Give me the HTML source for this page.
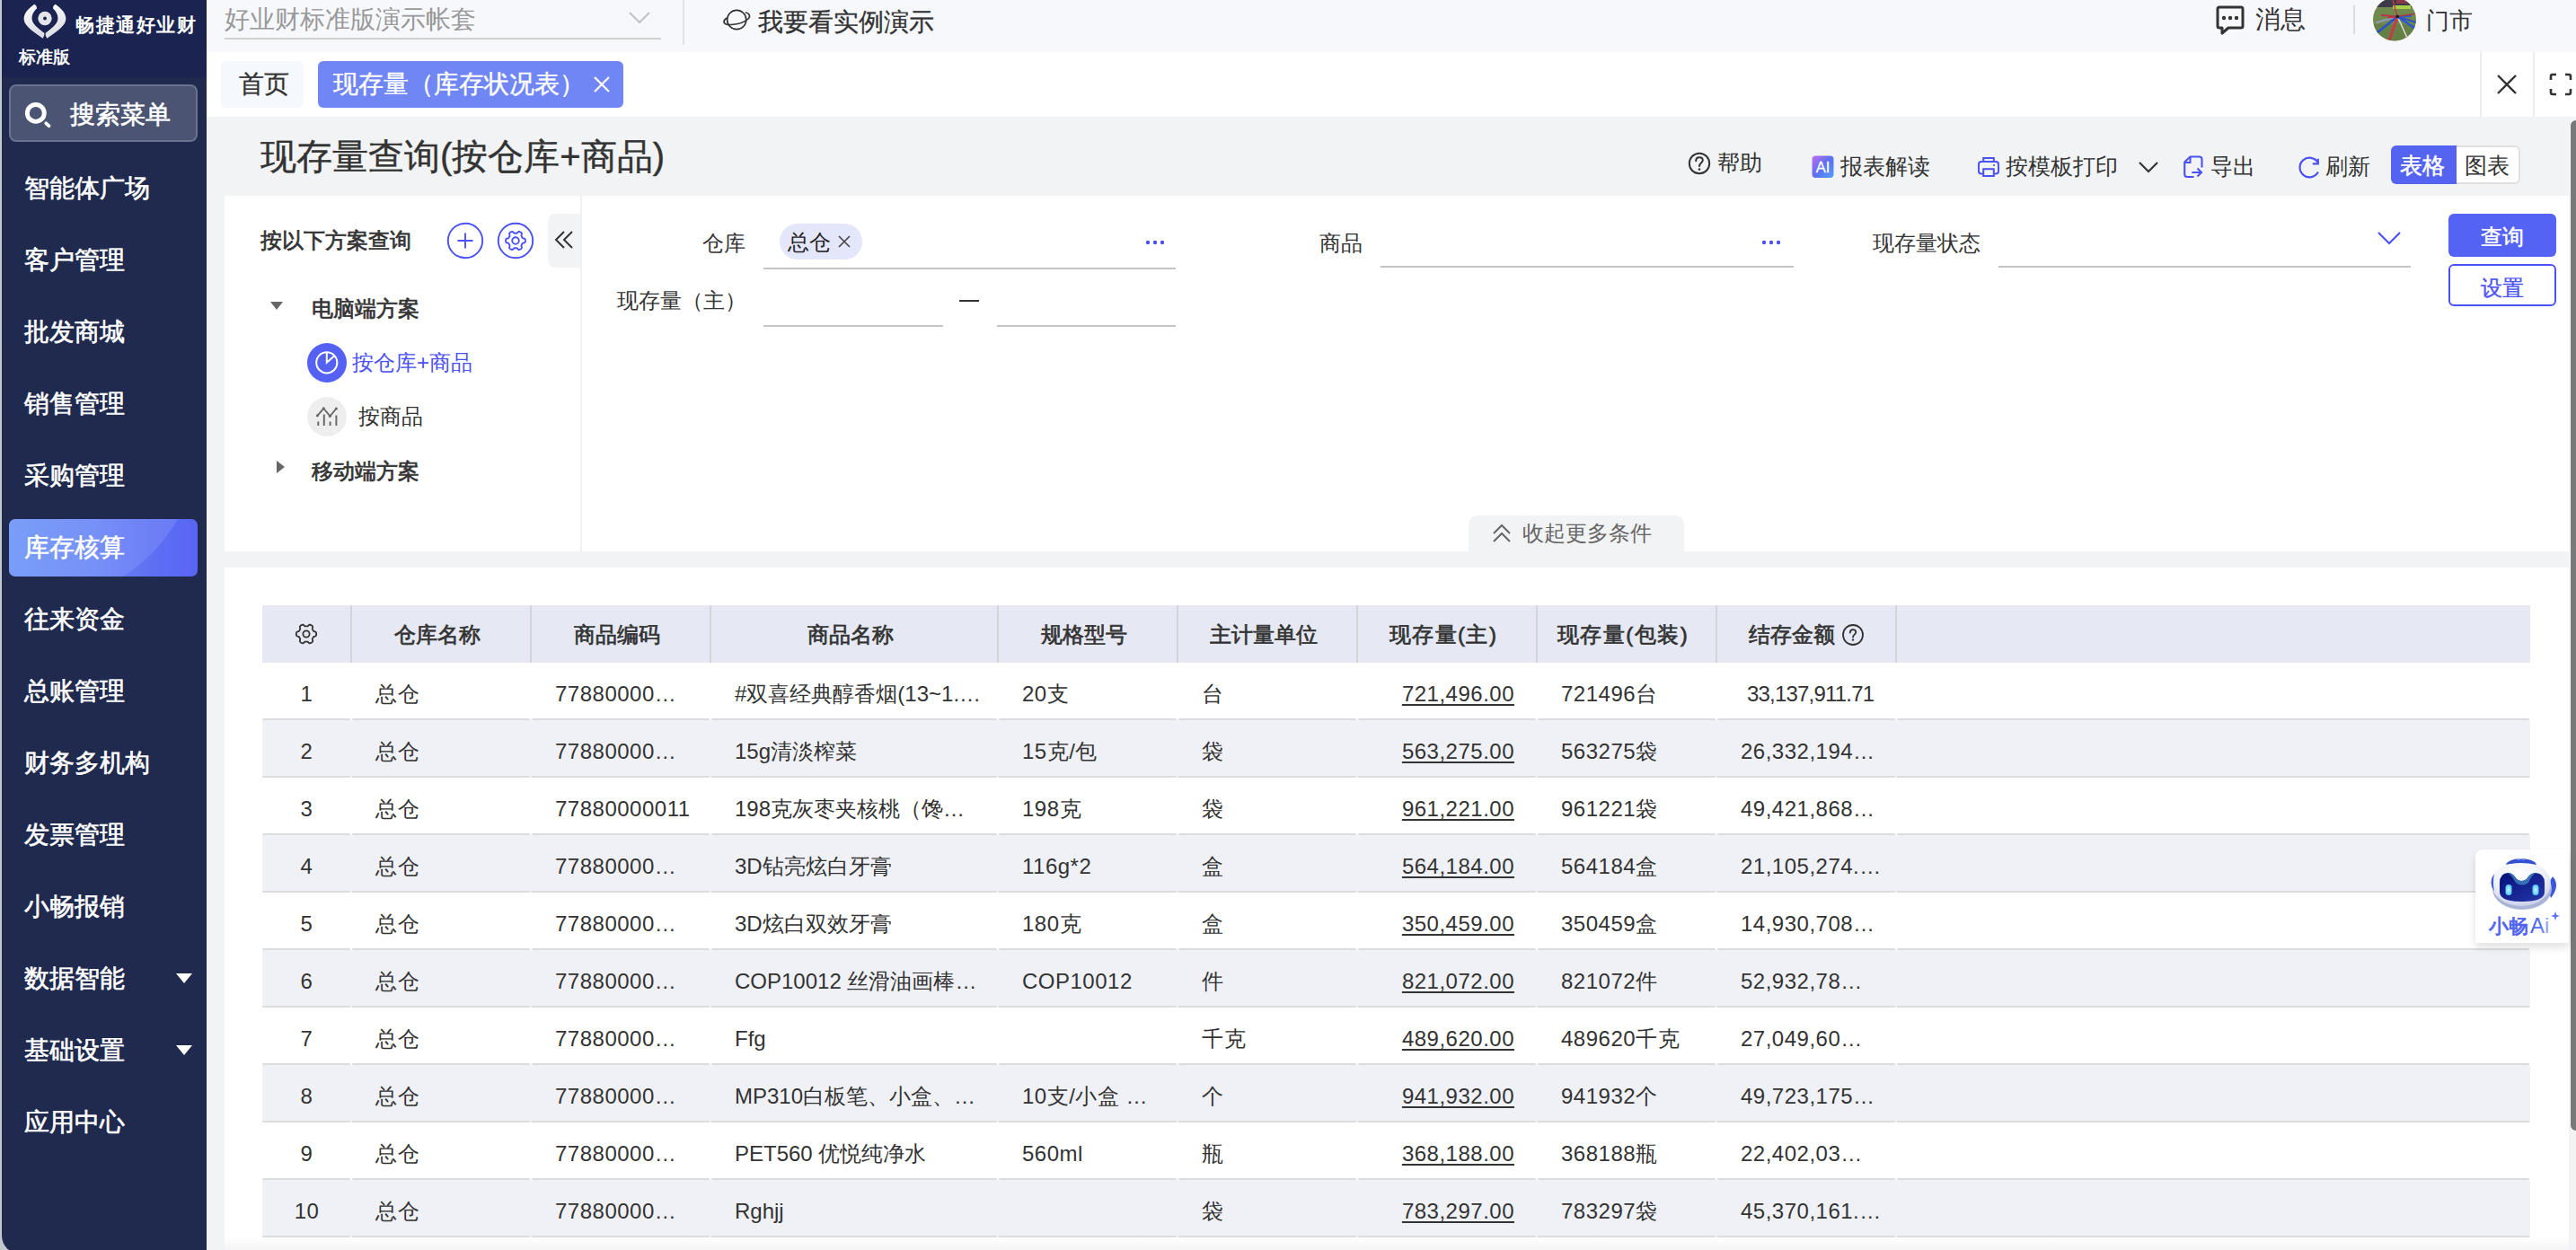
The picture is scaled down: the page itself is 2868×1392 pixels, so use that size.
<!DOCTYPE html>
<html><head><meta charset="utf-8">
<style>
*{box-sizing:border-box;margin:0;padding:0}
html,body{width:2868px;height:1392px;overflow:hidden;background:#f2f3f5;font-family:"Liberation Sans",sans-serif;color:#333}
.a{position:absolute;white-space:nowrap}
#side{position:absolute;left:0;top:0;width:230px;height:1392px;background:#c3c7ce;overflow:hidden}
#sidein{position:absolute;left:2px;top:0;width:228px;height:1396px;background:#1f2a4e;border-bottom-left-radius:20px;overflow:hidden}
#logo{position:absolute;left:0;top:0;width:228px;height:86px;background:#1b2451}
.menu{position:absolute;left:25px;font-size:28px;line-height:40px;color:#fff;font-weight:400;-webkit-text-stroke:0.6px #fff;white-space:nowrap}
#top{position:absolute;left:230px;top:0;width:2638px;height:58px;background:#f7f8fc}
#tabs{position:absolute;left:230px;top:58px;width:2638px;height:72px;background:#fff}
#qp{position:absolute;left:250px;top:218px;width:2610px;height:396px;background:#fff}
#tbl{position:absolute;left:250px;top:632px;width:2610px;height:780px;background:#fff}
.th{font-size:24px;line-height:40px;color:#333;-webkit-text-stroke:0.7px #333}
.td{font-size:24px;line-height:40px;color:#333;letter-spacing:0.5px}
.td u{text-decoration:underline;text-underline-offset:3px;text-decoration-thickness:1.5px}
</style></head><body>

<div id="side"><div id="sidein">
  <div id="logo">
    <svg class="a" style="left:-2px;top:0px" width="100" height="50" viewBox="0 0 100 50">
      <defs><linearGradient id="lg1" x1="0" y1="0" x2="0.3" y2="1"><stop offset="0" stop-color="#ffffff"/><stop offset="1" stop-color="#dcdde3"/></linearGradient></defs>
      <path d="M38.2 4.7 C31 10 26 15 26.7 22 C27.5 30 40 37 47.6 42.7 C49.5 40 49.5 38 49.3 36.7 C42 31 36 27 35.6 21 C35.2 16 38 12 41 9.4 C41 7 40 5.5 38.2 4.7 Z" fill="url(#lg1)"/>
      <path d="M61.8 4.7 C69 10 74 15 73.3 22 C72.5 30 60 37 52.4 42.7 C50.5 40 50.5 38 50.7 36.7 C58 31 64 27 64.4 21 C64.8 16 62 12 59 9.4 C59 7 60 5.5 61.8 4.7 Z" fill="url(#lg1)"/>
      <circle cx="50" cy="20.5" r="7.7" fill="#e4e5ea"/>
      <circle cx="50" cy="20.5" r="1.9" fill="#1b2451"/>
    </svg>
    <div class="a" style="left:82px;top:13px;font-size:21px;line-height:30px;color:#fff;font-weight:700;letter-spacing:1.5px">畅捷通好业财</div>
    <div class="a" style="left:19px;top:50px;font-size:19px;line-height:28px;color:#fff;font-weight:400;-webkit-text-stroke:0.6px #fff">标准版</div>
  </div>
  <div class="a" style="left:8px;top:94px;width:210px;height:64px;background:#4b5472;border:2px solid #6a7290;border-radius:8px"></div>
  <svg class="a" style="left:-2px;top:100px" width="70" height="50" viewBox="0 100 70 50"><circle cx="39.8" cy="125.9" r="9.45" fill="none" stroke="#fff" stroke-width="4.9"/><path d="M51.3 137.3 L54.5 140.2" stroke="#fff" stroke-width="3.8" stroke-linecap="round"/></svg>
  <div class="a" style="left:76px;top:108px;font-size:28px;line-height:40px;color:#fff;font-weight:400;-webkit-text-stroke:0.6px #fff">搜索菜单</div>
  <div class="menu" style="top:190px">智能体广场</div>
  <div class="menu" style="top:270px">客户管理</div>
  <div class="menu" style="top:350px">批发商城</div>
  <div class="menu" style="top:430px">销售管理</div>
  <div class="menu" style="top:510px">采购管理</div>
  <div class="a" style="left:8px;top:578px;width:210px;height:64px;border-radius:7px;background:linear-gradient(90deg,#6e9af6 0%,#6a88f5 45%,#5f70f3 75%,#5865f3 100%);overflow:hidden">
    <div class="a" style="left:-128px;top:-248px;width:336px;height:336px;border-radius:50%;background:rgba(150,170,255,0.28)"></div>
  </div>
  <div class="menu" style="top:590px">库存核算</div>
  <div class="menu" style="top:670px">往来资金</div>
  <div class="menu" style="top:750px">总账管理</div>
  <div class="menu" style="top:830px">财务多机构</div>
  <div class="menu" style="top:910px">发票管理</div>
  <div class="menu" style="top:990px">小畅报销</div>
  <div class="menu" style="top:1070px">数据智能</div>
  <div class="a" style="left:194px;top:1084px;width:0;height:0;border-left:9px solid transparent;border-right:9px solid transparent;border-top:11px solid #fff"></div>
  <div class="menu" style="top:1150px">基础设置</div>
  <div class="a" style="left:194px;top:1164px;width:0;height:0;border-left:9px solid transparent;border-right:9px solid transparent;border-top:11px solid #fff"></div>
  <div class="menu" style="top:1230px">应用中心</div>
</div></div>

<div id="top">
  <div class="a" style="left:20px;top:2px;font-size:28px;line-height:40px;color:#999">好业财标准版演示帐套</div>
  <div class="a" style="left:20px;top:42px;width:486px;height:2px;background:#d0d0d0"></div>
  <svg class="a" style="left:468px;top:10px" width="28" height="20" viewBox="0 0 28 20"><path d="M3 4 L14 15 L25 4" fill="none" stroke="#c4c4c4" stroke-width="2.2"/></svg>
  <div class="a" style="left:530px;top:0;width:2px;height:50px;background:#e2e3e8"></div>
  <svg class="a" style="left:565px;top:0px" width="60" height="50" viewBox="0 0 60 50"><circle cx="25.2" cy="22" r="10.6" fill="none" stroke="#333" stroke-width="1.7"/><path d="M13.5 20.5 C9 24 10.5 28 19 27.5 C27 27 35 24 38.5 20.5 C40.5 18 39.5 15 35.5 14" fill="none" stroke="#333" stroke-width="1.7" stroke-linecap="round"/></svg>
  <div class="a" style="left:614px;top:5px;font-size:28px;line-height:40px;color:#333;-webkit-text-stroke:0.3px #333">我要看实例演示</div>
  <svg class="a" style="left:2236px;top:5px" width="34" height="36" viewBox="0 0 34 36"><path d="M5 3 H29 Q31 3 31 5 V24 Q31 26 29 26 H15 L8 32 V26 H5 Q3 26 3 24 V5 Q3 3 5 3 Z" fill="none" stroke="#333" stroke-width="3" stroke-linejoin="round"/><circle cx="10" cy="15" r="2.2" fill="#333"/><circle cx="17" cy="15" r="2.2" fill="#333"/><circle cx="24" cy="15" r="2.2" fill="#333"/></svg>
  <div class="a" style="left:2281px;top:2px;font-size:28px;line-height:40px;color:#333">消息</div>
  <div class="a" style="left:2390px;top:6px;width:2px;height:32px;background:#dcdde2"></div>
  <svg class="a" style="left:2412px;top:-3px" width="48" height="49" viewBox="0 0 48 49">
    <defs><clipPath id="avc"><circle cx="24" cy="24.6" r="24"/></clipPath></defs>
    <g clip-path="url(#avc)">
      <rect x="0" y="0" width="48" height="49" fill="#6f8a4c"/>
      <rect x="0" y="0" width="48" height="11" fill="#3c3a48"/>
      <rect x="26" y="2" width="12" height="5" fill="#8a3a44"/>
      <rect x="22" y="9" width="20" height="4" fill="#a8d04a"/>
      <rect x="0" y="30" width="48" height="19" fill="#5f7a40" opacity="0.6"/>
      <g stroke-linecap="round">
        <path d="M27.2 21.4 L4 28" stroke="#8d9bb8" stroke-width="2.2"/>
        <path d="M27.2 21.4 L5 39" stroke="#2a4fd0" stroke-width="2.6"/>
        <path d="M27.2 21.4 L18.5 47" stroke="#c83848" stroke-width="3"/>
        <path d="M27.2 21.4 L38 45" stroke="#d8d8d8" stroke-width="1.6"/>
        <path d="M27.2 21.4 L46 34" stroke="#2a58d8" stroke-width="2.6"/>
        <path d="M27.2 21.4 L48 28" stroke="#2a50c8" stroke-width="2"/>
        <path d="M27.2 21.4 L42 21" stroke="#2c5ad0" stroke-width="2"/>
        <path d="M27.2 21.4 L46 18.5" stroke="#a83a50" stroke-width="1.6"/>
        <path d="M27.2 21.4 L10 20" stroke="#b83444" stroke-width="2"/>
        <path d="M27.2 21.4 L17 22.5" stroke="#b83444" stroke-width="1.8"/>
        <path d="M27.2 21.4 L22 3" stroke="#c03a40" stroke-width="1.4"/>
      </g>
      <circle cx="27.2" cy="21.4" r="2" fill="#222"/>
    </g>
  </svg>
  <div class="a" style="left:2471px;top:4px;font-size:26px;line-height:38px;color:#333">门市</div>
</div>
<div id="tabs">
  <div class="a" style="left:16px;top:10px;width:92px;height:52px;background:#f5f8fd;border-radius:6px"></div>
  <div class="a" style="left:36px;top:16px;font-size:28px;line-height:40px;color:#333;-webkit-text-stroke:0.3px #333">首页</div>
  <div class="a" style="left:124px;top:10px;width:340px;height:52px;background:#7086f4;border-radius:6px"></div>
  <div class="a" style="left:141px;top:16px;font-size:28px;line-height:40px;color:#fff;-webkit-text-stroke:0.4px #fff">现存量（库存状况表）</div>
  <svg class="a" style="left:428px;top:24px" width="24" height="24" viewBox="0 0 24 24"><path d="M4 4 L20 20 M20 4 L4 20" stroke="#fff" stroke-width="2.2"/></svg>
  <div class="a" style="left:2531px;top:0;width:2px;height:72px;background:#ececec"></div>
  <svg class="a" style="left:2549px;top:24px" width="24" height="24" viewBox="0 0 24 24"><path d="M2 2 L22 22 M22 2 L2 22" stroke="#333" stroke-width="2.4"/></svg>
  <div class="a" style="left:2590px;top:0;width:2px;height:72px;background:#ececec"></div>
  <svg class="a" style="left:2608px;top:23px" width="26" height="26" viewBox="0 0 26 26"><path d="M2 8 V4 Q2 2 4 2 H8 M18 2 H22 Q24 2 24 4 V8 M24 18 V22 Q24 24 22 24 H18 M8 24 H4 Q2 24 2 22 V18" fill="none" stroke="#333" stroke-width="2.6"/></svg>
</div>
<div id="title">
  <div class="a" style="left:290px;top:146px;font-size:40px;line-height:56px;color:#333;-webkit-text-stroke:0.4px #333">现存量查询(按仓库+商品)</div>
  <svg class="a" style="left:1878px;top:168px" width="28" height="28" viewBox="0 0 28 28"><circle cx="14" cy="14" r="11.2" fill="none" stroke="#333" stroke-width="2"/><path d="M10.2 11.2 C10.2 8.5 12 7.2 14 7.2 C16.2 7.2 17.8 8.6 17.8 10.6 C17.8 13 14.2 13.6 14 17" fill="none" stroke="#333" stroke-width="2" stroke-linecap="round"/><circle cx="14" cy="20.6" r="1.3" fill="#333"/></svg>
  <div class="a" style="left:1912px;top:163px;font-size:25px;line-height:36px;color:#333">帮助</div>
  <svg class="a" style="left:2017px;top:173px" width="26" height="26" viewBox="0 0 26 26"><defs><linearGradient id="aig" x1="0" y1="0" x2="1" y2="1"><stop offset="0" stop-color="#c06cef"/><stop offset="0.5" stop-color="#5b70f2"/><stop offset="1" stop-color="#55a0f8"/></linearGradient></defs><rect x="0.5" y="0.5" width="24" height="24.5" rx="4" fill="url(#aig)"/><text x="12.5" y="19.2" text-anchor="middle" font-family="Liberation Sans" font-size="16.5" fill="#fff" stroke="#fff" stroke-width="0.3">AI</text></svg>
  <div class="a" style="left:2049px;top:167px;font-size:25px;line-height:36px;color:#333">报表解读</div>
  <svg class="a" style="left:2190px;top:160px" width="50" height="50" viewBox="0 0 50 50"><path d="M18.2 19 V16 H29.8 V19" fill="none" stroke="#4b52f5" stroke-width="2"/><path d="M18 33.5 H16 Q13 33.5 13 30.5 V23 Q13 20 16 20 H32 Q35 20 35 23 V30.5 Q35 33.5 32 33.5 H30" fill="none" stroke="#4b52f5" stroke-width="2"/><rect x="18.2" y="28.2" width="11.6" height="7.8" fill="none" stroke="#4b52f5" stroke-width="2"/><circle cx="30" cy="24" r="1.1" fill="#4b52f5"/></svg>
  <div class="a" style="left:2233px;top:167px;font-size:25px;line-height:36px;color:#333">按模板打印</div>
  <svg class="a" style="left:2378px;top:176px" width="28" height="20" viewBox="0 0 28 20"><path d="M4 5 L14 15 L24 5" fill="none" stroke="#333" stroke-width="2.2"/></svg>
  <svg class="a" style="left:2420px;top:160px" width="40" height="50" viewBox="0 0 40 50"><path d="M22.5 37 H15.5 Q12.2 37 12.2 34 V20.5 L18.5 14.5 H28.5 Q31.5 14.5 31.5 17.5 V26.5" fill="none" stroke="#4b52f5" stroke-width="2.1" stroke-linejoin="round"/><path d="M12.5 21 H18.5 V14.5" fill="none" stroke="#4b52f5" stroke-width="2"/><path d="M20.3 32 H31 M26.5 27.5 L31 32 L26.5 36.5" fill="none" stroke="#4b52f5" stroke-width="2.1"/></svg>
  <div class="a" style="left:2461px;top:167px;font-size:25px;line-height:36px;color:#333">导出</div>
  <svg class="a" style="left:2550px;top:165px" width="40" height="42" viewBox="0 0 40 42"><path d="M30.6 16 A10.8 10.8 0 1 0 30.9 26.5" fill="none" stroke="#4b52f5" stroke-width="2.2"/><path d="M24.8 17.4 H30.8 V11.8" fill="none" stroke="#4b52f5" stroke-width="2.2"/></svg>
  <div class="a" style="left:2589px;top:167px;font-size:25px;line-height:36px;color:#333">刷新</div>
  <div class="a" style="left:2662px;top:162px;width:144px;height:43px;border:2px solid #e0e0e0;border-radius:6px;background:#fff"></div>
  <div class="a" style="left:2662px;top:162px;width:73px;height:43px;border-radius:6px 0 0 6px;background:#5563f1"></div>
  <div class="a" style="left:2672px;top:166px;font-size:25px;line-height:36px;color:#fff;-webkit-text-stroke:0.5px #fff">表格</div>
  <div class="a" style="left:2744px;top:166px;font-size:25px;line-height:36px;color:#333">图表</div>
</div>
<div id="qp">
  <div class="a" style="left:40px;top:32px;font-size:24px;line-height:36px;color:#333;-webkit-text-stroke:0.7px #333">按以下方案查询</div>
  <svg class="a" style="left:247px;top:29px" width="42" height="42" viewBox="0 0 42 42"><circle cx="21" cy="21" r="19.2" fill="none" stroke="#4b52f5" stroke-width="1.9"/><path d="M12.5 21 H29.5 M21 12.5 V29.5" stroke="#4b52f5" stroke-width="1.9"/></svg>
  <svg class="a" style="left:303px;top:29px" width="42" height="42" viewBox="0 0 42 42"><circle cx="21" cy="21" r="19.2" fill="none" stroke="#4b52f5" stroke-width="1.9"/><g transform="translate(21 21)"><path d="M10.90 0.00 L10.88 0.48 L10.83 0.95 L10.72 1.41 L10.50 1.85 L10.02 2.22 L9.22 2.47 L8.43 2.66 L7.93 2.89 L7.65 3.17 L7.46 3.48 L7.28 3.79 L7.10 4.10 L6.92 4.41 L6.74 4.72 L6.57 5.04 L6.47 5.43 L6.52 5.97 L6.75 6.75 L6.93 7.57 L6.85 8.16 L6.58 8.58 L6.24 8.91 L5.85 9.19 L5.45 9.44 L5.03 9.66 L4.60 9.85 L4.14 9.99 L3.65 10.01 L3.09 9.79 L2.47 9.22 L1.91 8.63 L1.47 8.31 L1.08 8.21 L0.72 8.20 L0.36 8.20 L0.00 8.20 L-0.36 8.20 L-0.72 8.20 L-1.08 8.21 L-1.47 8.31 L-1.91 8.63 L-2.47 9.22 L-3.09 9.79 L-3.65 10.01 L-4.14 9.99 L-4.60 9.85 L-5.03 9.66 L-5.45 9.44 L-5.85 9.19 L-6.24 8.91 L-6.58 8.58 L-6.85 8.16 L-6.93 7.57 L-6.75 6.75 L-6.52 5.97 L-6.47 5.43 L-6.57 5.04 L-6.74 4.72 L-6.92 4.41 L-7.10 4.10 L-7.28 3.79 L-7.46 3.48 L-7.65 3.17 L-7.93 2.89 L-8.43 2.66 L-9.22 2.47 L-10.02 2.22 L-10.50 1.85 L-10.72 1.41 L-10.83 0.95 L-10.88 0.48 L-10.90 0.00 L-10.88 -0.48 L-10.83 -0.95 L-10.72 -1.41 L-10.50 -1.85 L-10.02 -2.22 L-9.22 -2.47 L-8.43 -2.66 L-7.93 -2.89 L-7.65 -3.17 L-7.46 -3.48 L-7.28 -3.79 L-7.10 -4.10 L-6.92 -4.41 L-6.74 -4.72 L-6.57 -5.04 L-6.47 -5.43 L-6.52 -5.97 L-6.75 -6.75 L-6.93 -7.57 L-6.85 -8.16 L-6.58 -8.58 L-6.24 -8.91 L-5.85 -9.19 L-5.45 -9.44 L-5.03 -9.66 L-4.60 -9.85 L-4.14 -9.99 L-3.65 -10.01 L-3.09 -9.79 L-2.47 -9.22 L-1.91 -8.63 L-1.47 -8.31 L-1.08 -8.21 L-0.72 -8.20 L-0.36 -8.20 L-0.00 -8.20 L0.36 -8.20 L0.72 -8.20 L1.08 -8.21 L1.47 -8.31 L1.91 -8.63 L2.47 -9.22 L3.09 -9.79 L3.65 -10.01 L4.14 -9.99 L4.60 -9.85 L5.03 -9.66 L5.45 -9.44 L5.85 -9.19 L6.24 -8.91 L6.58 -8.58 L6.85 -8.16 L6.93 -7.57 L6.75 -6.75 L6.52 -5.97 L6.47 -5.43 L6.57 -5.04 L6.74 -4.72 L6.92 -4.41 L7.10 -4.10 L7.28 -3.79 L7.46 -3.48 L7.65 -3.17 L7.93 -2.89 L8.43 -2.66 L9.22 -2.47 L10.02 -2.22 L10.50 -1.85 L10.72 -1.41 L10.83 -0.95 L10.88 -0.48 Z" fill="none" stroke="#4b52f5" stroke-width="1.9" stroke-linejoin="round"/><circle r="3.8" fill="none" stroke="#4b52f5" stroke-width="1.9"/></g></svg>
  <div class="a" style="left:360px;top:20px;width:37px;height:60px;background:#f2f3f5;border-radius:8px 0 0 8px"></div>
  <svg class="a" style="left:366px;top:38px" width="26" height="24" viewBox="0 0 26 24"><path d="M12 2 L3 11 L12 20 M21 2 L12 11 L21 20" fill="none" stroke="#333" stroke-width="2"/></svg>
  <div class="a" style="left:396px;top:0;width:2px;height:396px;background:#f0f1f3"></div>
  <div class="a" style="left:51px;top:118px;width:0;height:0;border-left:7px solid transparent;border-right:7px solid transparent;border-top:9px solid #666"></div>
  <div class="a" style="left:97px;top:106px;font-size:24px;line-height:40px;color:#333;-webkit-text-stroke:0.7px #333">电脑端方案</div>
  <div class="a" style="left:92px;top:164px;width:44px;height:44px;border-radius:50%;background:#5461f3"></div>
  <svg class="a" style="left:92px;top:164px" width="44" height="44" viewBox="0 0 44 44"><circle cx="21.8" cy="21.8" r="11.6" fill="none" stroke="#fff" stroke-width="2"/><path d="M21.8 10.2 V21.8 L30 14.6" fill="none" stroke="#fff" stroke-width="2"/></svg>
  <div class="a" style="left:142px;top:166px;font-size:24px;line-height:40px;color:#4b52f5">按仓库+商品</div>
  <div class="a" style="left:92px;top:224px;width:44px;height:44px;border-radius:50%;background:#eeeeee"></div>
  <svg class="a" style="left:92px;top:224px" width="44" height="44" viewBox="0 0 44 44"><path d="M11.4 20.8 L18.3 12.8 L25.4 21.4 L32.4 13" fill="none" stroke="#666" stroke-width="1.8" stroke-linejoin="round"/><circle cx="11.4" cy="20.8" r="1.5" fill="#666"/><circle cx="18.3" cy="12.8" r="1.5" fill="#666"/><circle cx="25.4" cy="21.4" r="1.5" fill="#666"/><circle cx="32.4" cy="13" r="1.5" fill="#666"/><path d="M12.3 27.5 V32 M18.8 19.5 V32 M25.6 27.5 V32 M32.4 20.5 V32" stroke="#666" stroke-width="1.9"/></svg>
  <div class="a" style="left:149px;top:226px;font-size:24px;line-height:40px;color:#333">按商品</div>
  <div class="a" style="left:58px;top:295px;width:0;height:0;border-top:7px solid transparent;border-bottom:7px solid transparent;border-left:9px solid #666"></div>
  <div class="a" style="left:97px;top:287px;font-size:24px;line-height:40px;color:#333;-webkit-text-stroke:0.7px #333">移动端方案</div>

  <div class="a" style="left:532px;top:33px;font-size:24px;line-height:40px;color:#333">仓库</div>
  <div class="a" style="left:600px;top:80px;width:459px;height:2px;background:#c4c4c4"></div>
  <div class="a" style="left:618px;top:31px;width:92px;height:40px;border-radius:20px;background:#e4e6fb"></div>
  <div class="a" style="left:627px;top:32px;font-size:24px;line-height:40px;color:#222">总仓</div>
  <svg class="a" style="left:680px;top:41px" width="20" height="20" viewBox="0 0 20 20"><path d="M4 4 L16 16 M16 4 L4 16" stroke="#444" stroke-width="1.6"/></svg>
  <svg class="a" style="left:1024px;top:47px" width="24" height="10" viewBox="0 0 24 10"><circle cx="4" cy="5" r="2.2" fill="#4b52f5"/><circle cx="12" cy="5" r="2.2" fill="#4b52f5"/><circle cx="20" cy="5" r="2.2" fill="#4b52f5"/></svg>
  <div class="a" style="left:1219px;top:33px;font-size:24px;line-height:40px;color:#333">商品</div>
  <div class="a" style="left:1287px;top:78px;width:460px;height:2px;background:#c4c4c4"></div>
  <svg class="a" style="left:1710px;top:47px" width="24" height="10" viewBox="0 0 24 10"><circle cx="4" cy="5" r="2.2" fill="#4b52f5"/><circle cx="12" cy="5" r="2.2" fill="#4b52f5"/><circle cx="20" cy="5" r="2.2" fill="#4b52f5"/></svg>
  <div class="a" style="left:1835px;top:33px;font-size:24px;line-height:40px;color:#333">现存量状态</div>
  <div class="a" style="left:1975px;top:78px;width:459px;height:2px;background:#c4c4c4"></div>
  <svg class="a" style="left:2396px;top:38px" width="28" height="20" viewBox="0 0 28 20"><path d="M2 3 L14 15 L26 3" fill="none" stroke="#4b52f5" stroke-width="2.2"/></svg>
  <div class="a" style="left:2476px;top:20px;width:120px;height:48px;border-radius:6px;background:#5463f4"></div>
  <div class="a" style="left:2476px;top:26px;width:120px;text-align:center;font-size:24px;line-height:40px;color:#fff;-webkit-text-stroke:0.5px #fff">查询</div>
  <div class="a" style="left:2476px;top:76px;width:120px;height:47px;border-radius:6px;border:2px solid #4b52f5;background:#fff"></div>
  <div class="a" style="left:2476px;top:83px;width:120px;text-align:center;font-size:24px;line-height:40px;color:#4b52f5;-webkit-text-stroke:0.3px #4b52f5">设置</div>

  <div class="a" style="left:437px;top:97px;font-size:24px;line-height:40px;color:#333">现存量（主）</div>
  <div class="a" style="left:600px;top:144px;width:200px;height:2px;background:#c4c4c4"></div>
  <div class="a" style="left:818px;top:116px;width:22px;height:2px;background:#333"></div>
  <div class="a" style="left:860px;top:144px;width:199px;height:2px;background:#c4c4c4"></div>

  <div class="a" style="left:1385px;top:356px;width:240px;height:40px;border-radius:10px 10px 0 0;background:#f2f3f5"></div>
  <svg class="a" style="left:1410px;top:364px" width="24" height="24" viewBox="0 0 24 24"><path d="M3 12 L12 3 L21 12 M3 21 L12 12 L21 21" fill="none" stroke="#666" stroke-width="2"/></svg>
  <div class="a" style="left:1445px;top:356px;font-size:24px;line-height:40px;color:#666">收起更多条件</div>
</div>
<div id="tbl"></div>
<div id="table">
<div class="a" style="left:292px;top:674px;width:2525px;height:64px;background:#e6e9f3"></div>
<div class="a" style="left:390px;top:674px;width:2px;height:64px;background:#d4d4da"></div>
<div class="a" style="left:590px;top:674px;width:2px;height:64px;background:#d4d4da"></div>
<div class="a" style="left:790px;top:674px;width:2px;height:64px;background:#d4d4da"></div>
<div class="a" style="left:1110px;top:674px;width:2px;height:64px;background:#d4d4da"></div>
<div class="a" style="left:1310px;top:674px;width:2px;height:64px;background:#d4d4da"></div>
<div class="a" style="left:1510px;top:674px;width:2px;height:64px;background:#d4d4da"></div>
<div class="a" style="left:1710px;top:674px;width:2px;height:64px;background:#d4d4da"></div>
<div class="a" style="left:1910px;top:674px;width:2px;height:64px;background:#d4d4da"></div>
<div class="a" style="left:2110px;top:674px;width:2px;height:64px;background:#d4d4da"></div>
<svg class="a" style="left:327px;top:692px" width="28" height="28" viewBox="0 0 28 28"><g transform="translate(14 14)"><path d="M11.20 0.00 L11.18 0.49 L11.13 0.97 L11.02 1.45 L10.80 1.90 L10.34 2.29 L9.56 2.56 L8.79 2.77 L8.30 3.02 L8.02 3.32 L7.82 3.65 L7.63 3.97 L7.45 4.30 L7.26 4.62 L7.07 4.95 L6.89 5.28 L6.77 5.68 L6.79 6.22 L7.00 7.00 L7.15 7.80 L7.05 8.40 L6.77 8.82 L6.41 9.15 L6.01 9.44 L5.60 9.70 L5.17 9.93 L4.72 10.13 L4.25 10.27 L3.75 10.31 L3.18 10.10 L2.56 9.56 L1.99 9.00 L1.53 8.70 L1.13 8.61 L0.75 8.59 L0.38 8.60 L0.00 8.60 L-0.38 8.60 L-0.75 8.59 L-1.13 8.61 L-1.53 8.70 L-1.99 9.00 L-2.56 9.56 L-3.18 10.10 L-3.75 10.31 L-4.25 10.27 L-4.72 10.13 L-5.17 9.93 L-5.60 9.70 L-6.01 9.44 L-6.41 9.15 L-6.77 8.82 L-7.05 8.40 L-7.15 7.80 L-7.00 7.00 L-6.79 6.22 L-6.77 5.68 L-6.89 5.28 L-7.07 4.95 L-7.26 4.62 L-7.45 4.30 L-7.63 3.97 L-7.82 3.65 L-8.02 3.32 L-8.30 3.02 L-8.79 2.77 L-9.56 2.56 L-10.34 2.29 L-10.80 1.90 L-11.02 1.45 L-11.13 0.97 L-11.18 0.49 L-11.20 0.00 L-11.18 -0.49 L-11.13 -0.97 L-11.02 -1.45 L-10.80 -1.90 L-10.34 -2.29 L-9.56 -2.56 L-8.79 -2.77 L-8.30 -3.02 L-8.02 -3.32 L-7.82 -3.65 L-7.63 -3.97 L-7.45 -4.30 L-7.26 -4.62 L-7.07 -4.95 L-6.89 -5.28 L-6.77 -5.68 L-6.79 -6.22 L-7.00 -7.00 L-7.15 -7.80 L-7.05 -8.40 L-6.77 -8.82 L-6.41 -9.15 L-6.01 -9.44 L-5.60 -9.70 L-5.17 -9.93 L-4.72 -10.13 L-4.25 -10.27 L-3.75 -10.31 L-3.18 -10.10 L-2.56 -9.56 L-1.99 -9.00 L-1.53 -8.70 L-1.13 -8.61 L-0.75 -8.59 L-0.38 -8.60 L-0.00 -8.60 L0.38 -8.60 L0.75 -8.59 L1.13 -8.61 L1.53 -8.70 L1.99 -9.00 L2.56 -9.56 L3.18 -10.10 L3.75 -10.31 L4.25 -10.27 L4.72 -10.13 L5.17 -9.93 L5.60 -9.70 L6.01 -9.44 L6.41 -9.15 L6.77 -8.82 L7.05 -8.40 L7.15 -7.80 L7.00 -7.00 L6.79 -6.22 L6.77 -5.68 L6.89 -5.28 L7.07 -4.95 L7.26 -4.62 L7.45 -4.30 L7.63 -3.97 L7.82 -3.65 L8.02 -3.32 L8.30 -3.02 L8.79 -2.77 L9.56 -2.56 L10.34 -2.29 L10.80 -1.90 L11.02 -1.45 L11.13 -0.97 L11.18 -0.49 Z" fill="none" stroke="#333" stroke-width="1.8"/><circle r="3.6" fill="none" stroke="#333" stroke-width="1.8"/></g></svg>
<div class="a th" style="left:387px;top:687px;width:200px;text-align:center">仓库名称</div>
<div class="a th" style="left:587px;top:687px;width:200px;text-align:center">商品编码</div>
<div class="a th" style="left:787px;top:687px;width:320px;text-align:center">商品名称</div>
<div class="a th" style="left:1107px;top:687px;width:200px;text-align:center">规格型号</div>
<div class="a th" style="left:1307px;top:687px;width:200px;text-align:center">主计量单位</div>
<div class="a th" style="left:1507px;top:687px;width:200px;text-align:center;letter-spacing:1.5px">现存量(主)</div>
<div class="a th" style="left:1707px;top:687px;width:200px;text-align:center;letter-spacing:1.5px">现存量(包装)</div>
<div class="a th" style="left:1907px;top:687px;width:176px;text-align:center">结存金额</div>
<svg class="a" style="left:2050px;top:694px" width="26" height="26" viewBox="0 0 26 26"><circle cx="13" cy="13" r="11" fill="none" stroke="#333" stroke-width="1.8"/><path d="M9.8 10.6 C9.8 8.2 11.3 7.2 13 7.2 C14.9 7.2 16.3 8.4 16.3 10.1 C16.3 12.2 13.2 12.7 13 15.6" fill="none" stroke="#333" stroke-width="1.8" stroke-linecap="round"/><circle cx="13" cy="18.6" r="1.2" fill="#333"/></svg>
<div class="a" style="left:292px;top:738px;width:2525px;height:64px;background:#ffffff"></div>
<div class="a" style="left:292px;top:800px;width:98px;height:2px;background:#dcdcdf;border-radius:1px"></div>
<div class="a" style="left:392px;top:800px;width:198px;height:2px;background:#dcdcdf;border-radius:1px"></div>
<div class="a" style="left:592px;top:800px;width:198px;height:2px;background:#dcdcdf;border-radius:1px"></div>
<div class="a" style="left:792px;top:800px;width:318px;height:2px;background:#dcdcdf;border-radius:1px"></div>
<div class="a" style="left:1112px;top:800px;width:198px;height:2px;background:#dcdcdf;border-radius:1px"></div>
<div class="a" style="left:1312px;top:800px;width:198px;height:2px;background:#dcdcdf;border-radius:1px"></div>
<div class="a" style="left:1512px;top:800px;width:198px;height:2px;background:#dcdcdf;border-radius:1px"></div>
<div class="a" style="left:1712px;top:800px;width:198px;height:2px;background:#dcdcdf;border-radius:1px"></div>
<div class="a" style="left:1912px;top:800px;width:198px;height:2px;background:#dcdcdf;border-radius:1px"></div>
<div class="a" style="left:2112px;top:800px;width:704px;height:2px;background:#dcdcdf;border-radius:1px"></div>
<div class="a td" style="left:292px;top:753px;width:99px;text-align:center">1</div>
<div class="a td" style="left:418px;top:753px">总仓</div>
<div class="a td" style="left:618px;top:753px">77880000…</div>
<div class="a td" style="left:818px;top:753px;letter-spacing:0">#双喜经典醇香烟(13~1.…</div>
<div class="a td" style="left:1138px;top:753px">20支</div>
<div class="a td" style="left:1338px;top:753px">台</div>
<div class="a td" style="left:1511px;top:753px;width:175px;text-align:right"><u>721,496.00</u></div>
<div class="a td" style="left:1738px;top:753px">721496台</div>
<div class="a td" style="left:1945px;top:753px;letter-spacing:-0.8px">33,137,911.71</div>
<div class="a" style="left:292px;top:802px;width:2525px;height:64px;background:#f0f1f6"></div>
<div class="a" style="left:292px;top:864px;width:98px;height:2px;background:#dcdcdf;border-radius:1px"></div>
<div class="a" style="left:392px;top:864px;width:198px;height:2px;background:#dcdcdf;border-radius:1px"></div>
<div class="a" style="left:592px;top:864px;width:198px;height:2px;background:#dcdcdf;border-radius:1px"></div>
<div class="a" style="left:792px;top:864px;width:318px;height:2px;background:#dcdcdf;border-radius:1px"></div>
<div class="a" style="left:1112px;top:864px;width:198px;height:2px;background:#dcdcdf;border-radius:1px"></div>
<div class="a" style="left:1312px;top:864px;width:198px;height:2px;background:#dcdcdf;border-radius:1px"></div>
<div class="a" style="left:1512px;top:864px;width:198px;height:2px;background:#dcdcdf;border-radius:1px"></div>
<div class="a" style="left:1712px;top:864px;width:198px;height:2px;background:#dcdcdf;border-radius:1px"></div>
<div class="a" style="left:1912px;top:864px;width:198px;height:2px;background:#dcdcdf;border-radius:1px"></div>
<div class="a" style="left:2112px;top:864px;width:704px;height:2px;background:#dcdcdf;border-radius:1px"></div>
<div class="a td" style="left:292px;top:817px;width:99px;text-align:center">2</div>
<div class="a td" style="left:418px;top:817px">总仓</div>
<div class="a td" style="left:618px;top:817px">77880000…</div>
<div class="a td" style="left:818px;top:817px;letter-spacing:0">15g清淡榨菜</div>
<div class="a td" style="left:1138px;top:817px">15克/包</div>
<div class="a td" style="left:1338px;top:817px">袋</div>
<div class="a td" style="left:1511px;top:817px;width:175px;text-align:right"><u>563,275.00</u></div>
<div class="a td" style="left:1738px;top:817px">563275袋</div>
<div class="a td" style="left:1938px;top:817px">26,332,194…</div>
<div class="a" style="left:292px;top:866px;width:2525px;height:64px;background:#ffffff"></div>
<div class="a" style="left:292px;top:928px;width:98px;height:2px;background:#dcdcdf;border-radius:1px"></div>
<div class="a" style="left:392px;top:928px;width:198px;height:2px;background:#dcdcdf;border-radius:1px"></div>
<div class="a" style="left:592px;top:928px;width:198px;height:2px;background:#dcdcdf;border-radius:1px"></div>
<div class="a" style="left:792px;top:928px;width:318px;height:2px;background:#dcdcdf;border-radius:1px"></div>
<div class="a" style="left:1112px;top:928px;width:198px;height:2px;background:#dcdcdf;border-radius:1px"></div>
<div class="a" style="left:1312px;top:928px;width:198px;height:2px;background:#dcdcdf;border-radius:1px"></div>
<div class="a" style="left:1512px;top:928px;width:198px;height:2px;background:#dcdcdf;border-radius:1px"></div>
<div class="a" style="left:1712px;top:928px;width:198px;height:2px;background:#dcdcdf;border-radius:1px"></div>
<div class="a" style="left:1912px;top:928px;width:198px;height:2px;background:#dcdcdf;border-radius:1px"></div>
<div class="a" style="left:2112px;top:928px;width:704px;height:2px;background:#dcdcdf;border-radius:1px"></div>
<div class="a td" style="left:292px;top:881px;width:99px;text-align:center">3</div>
<div class="a td" style="left:418px;top:881px">总仓</div>
<div class="a td" style="left:618px;top:881px">77880000011</div>
<div class="a td" style="left:818px;top:881px;letter-spacing:0">198克灰枣夹核桃（馋…</div>
<div class="a td" style="left:1138px;top:881px">198克</div>
<div class="a td" style="left:1338px;top:881px">袋</div>
<div class="a td" style="left:1511px;top:881px;width:175px;text-align:right"><u>961,221.00</u></div>
<div class="a td" style="left:1738px;top:881px">961221袋</div>
<div class="a td" style="left:1938px;top:881px">49,421,868…</div>
<div class="a" style="left:292px;top:930px;width:2525px;height:64px;background:#f0f1f6"></div>
<div class="a" style="left:292px;top:992px;width:98px;height:2px;background:#dcdcdf;border-radius:1px"></div>
<div class="a" style="left:392px;top:992px;width:198px;height:2px;background:#dcdcdf;border-radius:1px"></div>
<div class="a" style="left:592px;top:992px;width:198px;height:2px;background:#dcdcdf;border-radius:1px"></div>
<div class="a" style="left:792px;top:992px;width:318px;height:2px;background:#dcdcdf;border-radius:1px"></div>
<div class="a" style="left:1112px;top:992px;width:198px;height:2px;background:#dcdcdf;border-radius:1px"></div>
<div class="a" style="left:1312px;top:992px;width:198px;height:2px;background:#dcdcdf;border-radius:1px"></div>
<div class="a" style="left:1512px;top:992px;width:198px;height:2px;background:#dcdcdf;border-radius:1px"></div>
<div class="a" style="left:1712px;top:992px;width:198px;height:2px;background:#dcdcdf;border-radius:1px"></div>
<div class="a" style="left:1912px;top:992px;width:198px;height:2px;background:#dcdcdf;border-radius:1px"></div>
<div class="a" style="left:2112px;top:992px;width:704px;height:2px;background:#dcdcdf;border-radius:1px"></div>
<div class="a td" style="left:292px;top:945px;width:99px;text-align:center">4</div>
<div class="a td" style="left:418px;top:945px">总仓</div>
<div class="a td" style="left:618px;top:945px">77880000…</div>
<div class="a td" style="left:818px;top:945px;letter-spacing:0">3D钻亮炫白牙膏</div>
<div class="a td" style="left:1138px;top:945px">116g*2</div>
<div class="a td" style="left:1338px;top:945px">盒</div>
<div class="a td" style="left:1511px;top:945px;width:175px;text-align:right"><u>564,184.00</u></div>
<div class="a td" style="left:1738px;top:945px">564184盒</div>
<div class="a td" style="left:1938px;top:945px">21,105,274.…</div>
<div class="a" style="left:292px;top:994px;width:2525px;height:64px;background:#ffffff"></div>
<div class="a" style="left:292px;top:1056px;width:98px;height:2px;background:#dcdcdf;border-radius:1px"></div>
<div class="a" style="left:392px;top:1056px;width:198px;height:2px;background:#dcdcdf;border-radius:1px"></div>
<div class="a" style="left:592px;top:1056px;width:198px;height:2px;background:#dcdcdf;border-radius:1px"></div>
<div class="a" style="left:792px;top:1056px;width:318px;height:2px;background:#dcdcdf;border-radius:1px"></div>
<div class="a" style="left:1112px;top:1056px;width:198px;height:2px;background:#dcdcdf;border-radius:1px"></div>
<div class="a" style="left:1312px;top:1056px;width:198px;height:2px;background:#dcdcdf;border-radius:1px"></div>
<div class="a" style="left:1512px;top:1056px;width:198px;height:2px;background:#dcdcdf;border-radius:1px"></div>
<div class="a" style="left:1712px;top:1056px;width:198px;height:2px;background:#dcdcdf;border-radius:1px"></div>
<div class="a" style="left:1912px;top:1056px;width:198px;height:2px;background:#dcdcdf;border-radius:1px"></div>
<div class="a" style="left:2112px;top:1056px;width:704px;height:2px;background:#dcdcdf;border-radius:1px"></div>
<div class="a td" style="left:292px;top:1009px;width:99px;text-align:center">5</div>
<div class="a td" style="left:418px;top:1009px">总仓</div>
<div class="a td" style="left:618px;top:1009px">77880000…</div>
<div class="a td" style="left:818px;top:1009px;letter-spacing:0">3D炫白双效牙膏</div>
<div class="a td" style="left:1138px;top:1009px">180克</div>
<div class="a td" style="left:1338px;top:1009px">盒</div>
<div class="a td" style="left:1511px;top:1009px;width:175px;text-align:right"><u>350,459.00</u></div>
<div class="a td" style="left:1738px;top:1009px">350459盒</div>
<div class="a td" style="left:1938px;top:1009px">14,930,708…</div>
<div class="a" style="left:292px;top:1058px;width:2525px;height:64px;background:#f0f1f6"></div>
<div class="a" style="left:292px;top:1120px;width:98px;height:2px;background:#dcdcdf;border-radius:1px"></div>
<div class="a" style="left:392px;top:1120px;width:198px;height:2px;background:#dcdcdf;border-radius:1px"></div>
<div class="a" style="left:592px;top:1120px;width:198px;height:2px;background:#dcdcdf;border-radius:1px"></div>
<div class="a" style="left:792px;top:1120px;width:318px;height:2px;background:#dcdcdf;border-radius:1px"></div>
<div class="a" style="left:1112px;top:1120px;width:198px;height:2px;background:#dcdcdf;border-radius:1px"></div>
<div class="a" style="left:1312px;top:1120px;width:198px;height:2px;background:#dcdcdf;border-radius:1px"></div>
<div class="a" style="left:1512px;top:1120px;width:198px;height:2px;background:#dcdcdf;border-radius:1px"></div>
<div class="a" style="left:1712px;top:1120px;width:198px;height:2px;background:#dcdcdf;border-radius:1px"></div>
<div class="a" style="left:1912px;top:1120px;width:198px;height:2px;background:#dcdcdf;border-radius:1px"></div>
<div class="a" style="left:2112px;top:1120px;width:704px;height:2px;background:#dcdcdf;border-radius:1px"></div>
<div class="a td" style="left:292px;top:1073px;width:99px;text-align:center">6</div>
<div class="a td" style="left:418px;top:1073px">总仓</div>
<div class="a td" style="left:618px;top:1073px">77880000…</div>
<div class="a td" style="left:818px;top:1073px;letter-spacing:0">COP10012 丝滑油画棒…</div>
<div class="a td" style="left:1138px;top:1073px">COP10012</div>
<div class="a td" style="left:1338px;top:1073px">件</div>
<div class="a td" style="left:1511px;top:1073px;width:175px;text-align:right"><u>821,072.00</u></div>
<div class="a td" style="left:1738px;top:1073px">821072件</div>
<div class="a td" style="left:1938px;top:1073px">52,932,78…</div>
<div class="a" style="left:292px;top:1122px;width:2525px;height:64px;background:#ffffff"></div>
<div class="a" style="left:292px;top:1184px;width:98px;height:2px;background:#dcdcdf;border-radius:1px"></div>
<div class="a" style="left:392px;top:1184px;width:198px;height:2px;background:#dcdcdf;border-radius:1px"></div>
<div class="a" style="left:592px;top:1184px;width:198px;height:2px;background:#dcdcdf;border-radius:1px"></div>
<div class="a" style="left:792px;top:1184px;width:318px;height:2px;background:#dcdcdf;border-radius:1px"></div>
<div class="a" style="left:1112px;top:1184px;width:198px;height:2px;background:#dcdcdf;border-radius:1px"></div>
<div class="a" style="left:1312px;top:1184px;width:198px;height:2px;background:#dcdcdf;border-radius:1px"></div>
<div class="a" style="left:1512px;top:1184px;width:198px;height:2px;background:#dcdcdf;border-radius:1px"></div>
<div class="a" style="left:1712px;top:1184px;width:198px;height:2px;background:#dcdcdf;border-radius:1px"></div>
<div class="a" style="left:1912px;top:1184px;width:198px;height:2px;background:#dcdcdf;border-radius:1px"></div>
<div class="a" style="left:2112px;top:1184px;width:704px;height:2px;background:#dcdcdf;border-radius:1px"></div>
<div class="a td" style="left:292px;top:1137px;width:99px;text-align:center">7</div>
<div class="a td" style="left:418px;top:1137px">总仓</div>
<div class="a td" style="left:618px;top:1137px">77880000…</div>
<div class="a td" style="left:818px;top:1137px;letter-spacing:0">Ffg</div>
<div class="a td" style="left:1338px;top:1137px">千克</div>
<div class="a td" style="left:1511px;top:1137px;width:175px;text-align:right"><u>489,620.00</u></div>
<div class="a td" style="left:1738px;top:1137px">489620千克</div>
<div class="a td" style="left:1938px;top:1137px">27,049,60…</div>
<div class="a" style="left:292px;top:1186px;width:2525px;height:64px;background:#f0f1f6"></div>
<div class="a" style="left:292px;top:1248px;width:98px;height:2px;background:#dcdcdf;border-radius:1px"></div>
<div class="a" style="left:392px;top:1248px;width:198px;height:2px;background:#dcdcdf;border-radius:1px"></div>
<div class="a" style="left:592px;top:1248px;width:198px;height:2px;background:#dcdcdf;border-radius:1px"></div>
<div class="a" style="left:792px;top:1248px;width:318px;height:2px;background:#dcdcdf;border-radius:1px"></div>
<div class="a" style="left:1112px;top:1248px;width:198px;height:2px;background:#dcdcdf;border-radius:1px"></div>
<div class="a" style="left:1312px;top:1248px;width:198px;height:2px;background:#dcdcdf;border-radius:1px"></div>
<div class="a" style="left:1512px;top:1248px;width:198px;height:2px;background:#dcdcdf;border-radius:1px"></div>
<div class="a" style="left:1712px;top:1248px;width:198px;height:2px;background:#dcdcdf;border-radius:1px"></div>
<div class="a" style="left:1912px;top:1248px;width:198px;height:2px;background:#dcdcdf;border-radius:1px"></div>
<div class="a" style="left:2112px;top:1248px;width:704px;height:2px;background:#dcdcdf;border-radius:1px"></div>
<div class="a td" style="left:292px;top:1201px;width:99px;text-align:center">8</div>
<div class="a td" style="left:418px;top:1201px">总仓</div>
<div class="a td" style="left:618px;top:1201px">77880000…</div>
<div class="a td" style="left:818px;top:1201px;letter-spacing:0">MP310白板笔、小盒、…</div>
<div class="a td" style="left:1138px;top:1201px">10支/小盒 …</div>
<div class="a td" style="left:1338px;top:1201px">个</div>
<div class="a td" style="left:1511px;top:1201px;width:175px;text-align:right"><u>941,932.00</u></div>
<div class="a td" style="left:1738px;top:1201px">941932个</div>
<div class="a td" style="left:1938px;top:1201px">49,723,175…</div>
<div class="a" style="left:292px;top:1250px;width:2525px;height:64px;background:#ffffff"></div>
<div class="a" style="left:292px;top:1312px;width:98px;height:2px;background:#dcdcdf;border-radius:1px"></div>
<div class="a" style="left:392px;top:1312px;width:198px;height:2px;background:#dcdcdf;border-radius:1px"></div>
<div class="a" style="left:592px;top:1312px;width:198px;height:2px;background:#dcdcdf;border-radius:1px"></div>
<div class="a" style="left:792px;top:1312px;width:318px;height:2px;background:#dcdcdf;border-radius:1px"></div>
<div class="a" style="left:1112px;top:1312px;width:198px;height:2px;background:#dcdcdf;border-radius:1px"></div>
<div class="a" style="left:1312px;top:1312px;width:198px;height:2px;background:#dcdcdf;border-radius:1px"></div>
<div class="a" style="left:1512px;top:1312px;width:198px;height:2px;background:#dcdcdf;border-radius:1px"></div>
<div class="a" style="left:1712px;top:1312px;width:198px;height:2px;background:#dcdcdf;border-radius:1px"></div>
<div class="a" style="left:1912px;top:1312px;width:198px;height:2px;background:#dcdcdf;border-radius:1px"></div>
<div class="a" style="left:2112px;top:1312px;width:704px;height:2px;background:#dcdcdf;border-radius:1px"></div>
<div class="a td" style="left:292px;top:1265px;width:99px;text-align:center">9</div>
<div class="a td" style="left:418px;top:1265px">总仓</div>
<div class="a td" style="left:618px;top:1265px">77880000…</div>
<div class="a td" style="left:818px;top:1265px;letter-spacing:0">PET560 优悦纯净水</div>
<div class="a td" style="left:1138px;top:1265px">560ml</div>
<div class="a td" style="left:1338px;top:1265px">瓶</div>
<div class="a td" style="left:1511px;top:1265px;width:175px;text-align:right"><u>368,188.00</u></div>
<div class="a td" style="left:1738px;top:1265px">368188瓶</div>
<div class="a td" style="left:1938px;top:1265px">22,402,03…</div>
<div class="a" style="left:292px;top:1314px;width:2525px;height:64px;background:#f0f1f6"></div>
<div class="a" style="left:292px;top:1376px;width:98px;height:2px;background:#dcdcdf;border-radius:1px"></div>
<div class="a" style="left:392px;top:1376px;width:198px;height:2px;background:#dcdcdf;border-radius:1px"></div>
<div class="a" style="left:592px;top:1376px;width:198px;height:2px;background:#dcdcdf;border-radius:1px"></div>
<div class="a" style="left:792px;top:1376px;width:318px;height:2px;background:#dcdcdf;border-radius:1px"></div>
<div class="a" style="left:1112px;top:1376px;width:198px;height:2px;background:#dcdcdf;border-radius:1px"></div>
<div class="a" style="left:1312px;top:1376px;width:198px;height:2px;background:#dcdcdf;border-radius:1px"></div>
<div class="a" style="left:1512px;top:1376px;width:198px;height:2px;background:#dcdcdf;border-radius:1px"></div>
<div class="a" style="left:1712px;top:1376px;width:198px;height:2px;background:#dcdcdf;border-radius:1px"></div>
<div class="a" style="left:1912px;top:1376px;width:198px;height:2px;background:#dcdcdf;border-radius:1px"></div>
<div class="a" style="left:2112px;top:1376px;width:704px;height:2px;background:#dcdcdf;border-radius:1px"></div>
<div class="a td" style="left:292px;top:1329px;width:99px;text-align:center">10</div>
<div class="a td" style="left:418px;top:1329px">总仓</div>
<div class="a td" style="left:618px;top:1329px">77880000…</div>
<div class="a td" style="left:818px;top:1329px;letter-spacing:0">Rghjj</div>
<div class="a td" style="left:1338px;top:1329px">袋</div>
<div class="a td" style="left:1511px;top:1329px;width:175px;text-align:right"><u>783,297.00</u></div>
<div class="a td" style="left:1738px;top:1329px">783297袋</div>
<div class="a td" style="left:1938px;top:1329px">45,370,161.…</div>
<div class="a" style="left:250px;top:1378px;width:2610px;height:14px;background:linear-gradient(#fff,#f4f4f6)"></div>
</div>


<div class="a" style="left:2861px;top:133px;width:14px;height:1127px;border-radius:7px;background:#78797b;border:1px solid #fff"></div>
<div class="a" style="left:2756px;top:946px;width:104px;height:104px;background:#fff;border-radius:8px 0 0 0;box-shadow:0 5px 10px rgba(0,0,0,0.12)"></div>
<svg class="a" style="left:2756px;top:946px" width="104" height="104" viewBox="0 0 104 104">
  <defs>
    <radialGradient id="rhd" cx="0.45" cy="0.3" r="0.75"><stop offset="0" stop-color="#ffffff"/><stop offset="0.6" stop-color="#eef1fa"/><stop offset="1" stop-color="#c3cbe6"/></radialGradient>
    <linearGradient id="rvis" x1="0" y1="0" x2="1" y2="1"><stop offset="0" stop-color="#06107a"/><stop offset="1" stop-color="#2536a8"/></linearGradient>
    <linearGradient id="rtxt" x1="0" y1="0" x2="1" y2="0"><stop offset="0" stop-color="#4a60f0"/><stop offset="0.55" stop-color="#5a70f2"/><stop offset="1" stop-color="#a6b4f8"/></linearGradient>
    <radialGradient id="reye" cx="0.5" cy="0.5" r="0.5"><stop offset="0" stop-color="#c8f6ff"/><stop offset="1" stop-color="#53c8f5"/></radialGradient>
  </defs>
  
  <path d="M86 30 Q95 40 84 54 L80 40 Z" fill="#3a56dc"/>
  <ellipse cx="52" cy="44" rx="33" ry="23" fill="#a9b4d6"/>
  <ellipse cx="51" cy="38" rx="33" ry="25" fill="url(#rhd)"/>
  <path d="M34 17 C36 8 66 8 68 17 Q51 13 34 17 Z" fill="#3350d0"/><path d="M47 11.5 Q51 9.5 55 11.5" stroke="#8fb0ff" stroke-width="1" fill="none"/>
  <path d="M21 27 Q14 36 21 47 Q19 37 21 27 Z" fill="#3e5ad8"/><path d="M27 37 Q27 27 36 26 Q42 26 46 33 Q51 37 57 33 Q61 26 67 26 Q77 27 77 37 V47 Q77 58 52 58 Q27 58 27 47 Z" fill="url(#rvis)"/>
  <path d="M36 26 Q42 26 46 33 Q51 37 57 33 Q61 26 67 26 Q62 30 59 37 Q52 42 45 37 Q41 29 36 26 Z" fill="#3e86c0" opacity="0.8"/>
  <rect x="33.5" y="39" width="7" height="12" rx="3.5" fill="url(#reye)"/>
  <rect x="63.5" y="39" width="7" height="12" rx="3.5" fill="url(#reye)"/>
  <text x="15" y="93" font-family="Liberation Sans" font-size="22" fill="#4d62f0" stroke="#4d62f0" stroke-width="0.8">小畅</text>
  <text x="61" y="93" font-family="Liberation Sans" font-size="24" fill="url(#rtxt)">Ai</text>
  <path d="M89 69 L90.3 72.7 L94 74 L90.3 75.3 L89 79 L87.7 75.3 L84 74 L87.7 72.7 Z" fill="#5d74f4"/>
</svg>
</body></html>
